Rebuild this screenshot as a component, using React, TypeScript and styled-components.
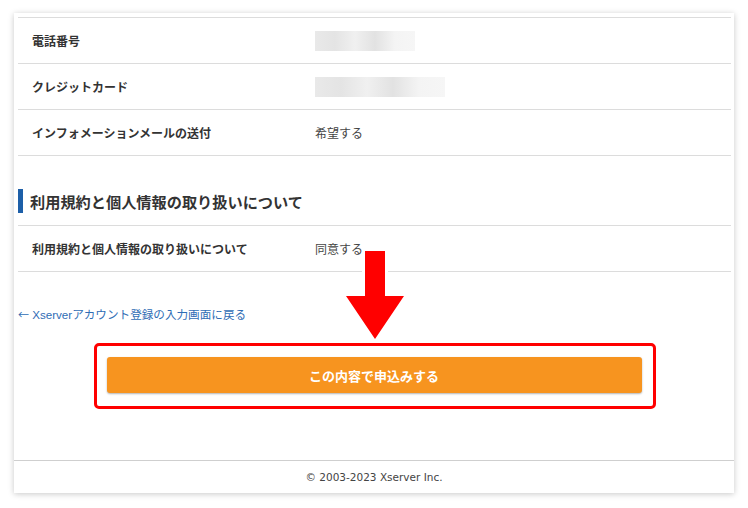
import React from 'react';
import styled, { createGlobalStyle } from 'styled-components';

const GlobalStyle = createGlobalStyle`
  html, body {
    margin: 0;
    padding: 0;
    background: #fff;
  }
  body {
    font-family: "Noto Sans CJK JP", "Noto Sans", sans-serif;
    color: #333;
  }
`;

type Row = { label: string; value?: string; mask?: number };

const contactRows: Row[] = [
  { label: '電話番号', mask: 100 },
  { label: 'クレジットカード', mask: 130 },
  { label: 'インフォメーションメールの送付', value: '希望する' },
];

const agreeRows: Row[] = [
  { label: '利用規約と個人情報の取り扱いについて', value: '同意する' },
];

const App = () => {
  return (
    <>
      <GlobalStyle />
      <Page>
        <Card>
          <Content>
            <Table>
              {contactRows.map((r) => (
                <TableRow key={r.label}>
                  <Label>{r.label}</Label>
                  {r.mask ? <Mask style={{ width: r.mask }} /> : <Value>{r.value}</Value>}
                </TableRow>
              ))}
            </Table>

            <Heading>利用規約と個人情報の取り扱いについて</Heading>

            <Table>
              {agreeRows.map((r) => (
                <TableRow key={r.label}>
                  <Label>{r.label}</Label>
                  <Value>{r.value}</Value>
                </TableRow>
              ))}
            </Table>

            <BackLink href="#">
              <LinkArrow>←</LinkArrow> Xserverアカウント登録の入力画面に戻る
            </BackLink>

            <ButtonArea>
              <Highlight>
                <SubmitButton type="button">この内容で申込みする</SubmitButton>
              </Highlight>
            </ButtonArea>
          </Content>

          <Footer>© 2003-2023 Xserver Inc.</Footer>

          <Arrow width="64" height="94" viewBox="0 0 64 94">
            <polygon
              points="22,3 42,3 42,48 61,48 32,91 3,48 22,48"
              fill="#ff0000"
              stroke="#fff"
              strokeWidth="6"
              strokeLinejoin="miter"
              paintOrder="stroke"
            />
          </Arrow>
        </Card>
      </Page>
    </>
  );
};

export default App;

const Page = styled.div`
  padding: 13px 14px 15px 14px;
`;

const Card = styled.div`
  position: relative;
  width: 720px;
  background: #fff;
  box-shadow: 0 1px 6px rgba(0, 0, 0, 0.22);
`;

const Content = styled.div`
  padding: 4px 3px 51px 4px;
`;

const Table = styled.div`
  border-top: 1px solid #dcdcdc;
`;

const TableRow = styled.div`
  display: flex;
  align-items: center;
  height: 45px;
  border-bottom: 1px solid #dcdcdc;
`;

const Label = styled.div`
  width: 283px;
  padding-left: 14px;
  font-size: 12px;
  font-weight: bold;
  color: #333;
`;

const Value = styled.div`
  font-size: 12px;
  color: #444;
`;

const Mask = styled.div`
  height: 20px;
  background: linear-gradient(
    90deg,
    #e9e9e9 0%,
    #e4e4e4 20%,
    #f0f0f0 40%,
    #e2e2e2 60%,
    #f4f4f4 80%,
    #f6f6f6 100%
  );
`;

const Heading = styled.h2`
  margin: 33px 0 12px 0;
  height: 24px;
  display: flex;
  align-items: center;
  border-left: 5px solid #1d5fa8;
  padding-left: 7px;
  font-size: 15.2px;
  font-weight: bold;
  color: #333;
`;

const BackLink = styled.a`
  display: block;
  height: 18px;
  margin-top: 34px;
  font-family: "Liberation Sans", "Noto Sans CJK JP", sans-serif;
  font-size: 11.6px;
  line-height: 18px;
  color: #2f6db5;
  text-decoration: none;
`;

const LinkArrow = styled.span`
  font-family: "Noto Sans CJK JP", sans-serif;
  font-size: 11px;
  line-height: 1;
`;

const ButtonArea = styled.div`
  display: flex;
  justify-content: center;
  margin-top: 19px;
`;

const Highlight = styled.div`
  width: 535px;
  padding: 11px 11px 13px 10px;
  border: 3px solid #ff0000;
  border-radius: 5px;
`;

const SubmitButton = styled.button`
  display: block;
  width: 100%;
  height: 36px;
  border: none;
  border-radius: 3px;
  background: #f7941f;
  box-shadow: 0 1px 2px rgba(0, 0, 0, 0.3);
  color: #fff;
  font-family: "Noto Sans CJK JP", sans-serif;
  font-size: 13px;
  font-weight: bold;
  cursor: pointer;
`;

const Footer = styled.div`
  height: 32px;
  border-top: 1px solid #cfcfcf;
  display: flex;
  align-items: center;
  justify-content: center;
  font-family: "DejaVu Sans", sans-serif;
  font-size: 10.5px;
  color: #444;
`;

const Arrow = styled.svg`
  position: absolute;
  left: 329px;
  top: 235px;
`;
